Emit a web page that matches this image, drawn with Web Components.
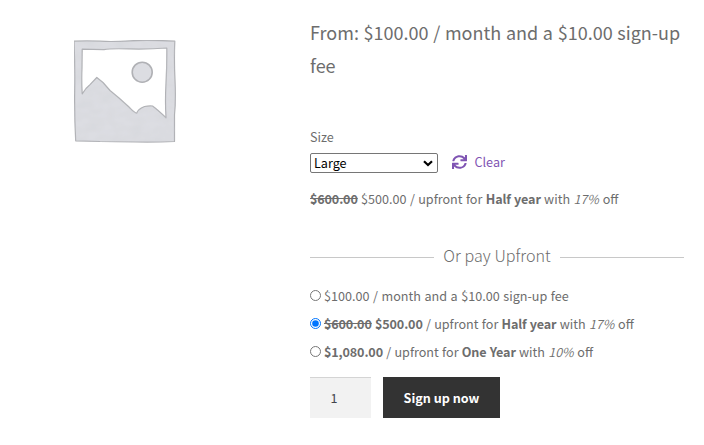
<!DOCTYPE html>
<html lang="en">
<head>
<meta charset="utf-8">
<title>Subscription product</title>
<style>
  body {
    margin: 0;
    width: 704px;
    height: 445px;
    overflow: hidden;
    background: #fff;
    color: #6d6d6d;
    font: 12.6px/22px "Noto Sans CJK SC", "Open Sans", sans-serif;
    word-spacing: 0.75px;
  }
</style>
</head>
<body>
<product-page>
  <product-image slot="gallery"></product-image>
  <product-price>From: $100.00 / month and a $10.00 sign-up fee</product-price>
  <variation-select label="Size" value="Large"></variation-select>
  <plan-text class="summary"><s>$600.00</s> $500.00 / upfront for <b>Half year</b> with <i>17%</i> off</plan-text>
  <section-divider>Or pay Upfront</section-divider>
  <plan-options>
    <plan-option>$100.00 / month and a $10.00 sign-up fee</plan-option>
    <plan-option checked><s>$600.00</s> <b>$500.00</b> / upfront for <b>Half year</b> with <i>17%</i> off</plan-option>
    <plan-option><b>$1,080.00</b> / upfront for <b>One Year</b> with <i>10%</i> off</plan-option>
  </plan-options>
  <add-to-cart quantity="1">Sign up now</add-to-cart>
</product-page>

<script>
// Attach an open shadow root and clone the markup into it
function render(element, html) {
  const template = document.createElement('template');
  template.innerHTML = html;
  element.attachShadow({ mode: 'open' }).appendChild(template.content.cloneNode(true));
}

// Inline marks that a plan description may contain
const marks = `
  ::slotted(s), ::slotted(b) { font-weight: 700; letter-spacing: -0.14px; }
  ::slotted(i) { margin-right: 0.5px; font-style: italic; font-weight: 350; }
`;

class ProductPage extends HTMLElement {
  constructor() {
    super();
    render(this, `
      <style>
        :host { display: grid; grid-template-columns: 310px 374px; }
        .summary { display: flex; flex-direction: column; padding-top: 16px; }
      </style>
      <slot name="gallery"></slot>
      <div class="summary"><slot></slot></div>
    `);
  }
}

class ProductImage extends HTMLElement {
  constructor() {
    super();
    render(this, `
      <style>
        :host { display: block; padding: 39px 0 0 72px; }
        svg { display: block; }
      </style>
      <svg width="105" height="105" viewBox="72 39 105 105">
        <defs>
          <filter id="paper" x="0" y="0" width="100%" height="100%">
            <feTurbulence type="fractalNoise" baseFrequency="0.07 0.11" numOctaves="2" seed="4" result="noise"/>
            <feColorMatrix in="noise" values="0 0 0 0 0.6  0 0 0 0 0.61  0 0 0 0 0.64  0.5 0 0 0 -0.17" result="tint"/>
            <feComposite in="tint" in2="SourceGraphic" operator="in" result="grain"/>
            <feMerge><feMergeNode in="SourceGraphic"/><feMergeNode in="grain"/></feMerge>
          </filter>
        </defs>
        <g fill="#dcdde2" stroke="#b0b1b5" stroke-width="1.2" stroke-linejoin="round">
          <path filter="url(#paper)" fill-rule="evenodd" d="M74 41.2 Q87 40.4 100 41.2 T130 40.8 T174.8 41.2 Q174 60 175 80 T174.5 115 L174.5 141.5 Q155 142.4 135 142 T100 141.5 L75.7 140.8 Q74.3 115 74.7 90 T74 41.2Z
            M82.2 49.2 L82 68 Q81.4 80 82.2 93.8 L86 88.5 90 84.6 96.8 77.5 103 82.5 110 90.5 119 98 129 107 C132 110 134 112.6 136.8 113.2 Q137.5 109.5 144.5 106.5 Q149 105.6 152.5 106 Q158 110 166 117.8 Q165 101 166 83 T166.8 48 Q148 49.4 129 48.9 T104 49.6 Z"/>
          <circle cx="142.2" cy="72.2" r="10" stroke-width="1.6"/>
        </g>
      </svg>
    `);
  }
}

class ProductPrice extends HTMLElement {
  constructor() {
    super();
    render(this, `
      <style>
        :host { display: block; height: 110px; font-size: 18px; line-height: 33px; word-spacing: 0.65px; }
      </style>
      <slot></slot>
    `);
  }
}

class VariationSelect extends HTMLElement {
  constructor() {
    super();
    render(this, `
      <style>
        :host { display: block; }
        .label { height: 27px; }
        .row { display: flex; align-items: center; height: 20px; }
        .select {
          display: flex;
          align-items: center;
          justify-content: space-between;
          box-sizing: border-box;
          width: 128px;
          height: 20px;
          padding: 0 4px 0 3px;
          border: 1px solid #767676;
          border-radius: 2px;
          background: #fff;
          color: #000;
          line-height: 18px;
        }
        .sync { margin: -2px 0 0 14px; }
        a { margin: -2px 0 0 7.5px; color: #7f54b3; }
      </style>
      <div class="label">${this.getAttribute('label')}</div>
      <div class="row">
        <div class="select" role="combobox" tabindex="0">
          <span>${this.getAttribute('value')}</span>
          <svg width="10" height="7" viewBox="0 0 10 7" fill="none" stroke="#000" stroke-width="2.2">
            <path d="M1 1.2 5 5 9 1.2"/>
          </svg>
        </div>
        <svg class="sync" width="15" height="14" viewBox="0 0 512 512" preserveAspectRatio="none" fill="#7f54b3">
          <path d="M440.65 12.57l4 82.77A247.16 247.16 0 0 0 255.83 8C134.73 8 33.91 94.92 12.29 209.82A12 12 0 0 0 24.09 224h49.05a12 12 0 0 0 11.67-9.26 175.91 175.91 0 0 1 317-56.94l-101.46-4.86a12 12 0 0 0-12.57 12v47.41a12 12 0 0 0 12 12H500a12 12 0 0 0 12-12V12a12 12 0 0 0-12-12h-47.37a12 12 0 0 0-11.98 12.57zM255.83 432a175.61 175.61 0 0 1-146-77.8l101.8 4.87a12 12 0 0 0 12.57-12v-47.4a12 12 0 0 0-12-12H12a12 12 0 0 0-12 12V500a12 12 0 0 0 12 12h47.35a12 12 0 0 0 12-12.6l-4.15-82.57A247.17 247.17 0 0 0 255.83 504c121.11 0 221.93-86.92 243.55-201.82a12 12 0 0 0-11.8-14.18h-49.05a12 12 0 0 0-11.67 9.26A175.86 175.86 0 0 1 255.83 432z"/>
        </svg>
        <a>Clear</a>
      </div>
    `);
  }
}

class PlanText extends HTMLElement {
  constructor() {
    super();
    render(this, `
      <style>
        :host { display: block; margin-top: 15px; white-space: nowrap; word-spacing: 0.55px; }
        ${marks}
      </style>
      <slot></slot>
    `);
  }
}

class SectionDivider extends HTMLElement {
  constructor() {
    super();
    render(this, `
      <style>
        :host {
          display: flex;
          align-items: center;
          gap: 9px;
          height: 26px;
          margin-top: 32px;
          font-size: 16.1px;
          font-weight: 200;
          white-space: nowrap;
          word-spacing: 0.2px;
        }
        :host::before, :host::after { content: ""; flex: 1; height: 1px; margin-top: 4px; background: #c8c8c8; }
      </style>
      <slot></slot>
    `);
  }
}

class PlanOptions extends HTMLElement {
  constructor() {
    super();
    render(this, `
      <style>
        :host { display: flex; flex-direction: column; gap: 6px; margin-top: 17px; }
      </style>
      <slot></slot>
    `);
  }
}

class PlanOption extends HTMLElement {
  constructor() {
    super();
    render(this, `
      <style>
        :host { display: flex; align-items: center; gap: 3px; height: 22px; white-space: nowrap; }
        :host(:not(:first-child)) { word-spacing: 0.45px; }
        input { flex: none; width: 11px; height: 11px; margin: -1px 0 0; }
        ${marks}
      </style>
      <input type="radio">
      <span><slot></slot></span>
    `);
    this.shadowRoot.querySelector('input').checked = this.hasAttribute('checked');
  }
}

class AddToCart extends HTMLElement {
  constructor() {
    super();
    render(this, `
      <style>
        :host { display: flex; gap: 12px; height: 41px; margin-top: 14px; line-height: 41px; }
        .quantity {
          box-sizing: border-box;
          width: 61px;
          padding-right: 13px;
          background: #f2f2f2;
          box-shadow: inset 0 1px 0 #d4d4d4;
          color: #43454b;
          text-align: center;
        }
        button {
          width: 117px;
          padding: 0 0 2px;
          border: 0;
          background: #333;
          color: #fff;
          font: inherit;
          font-weight: 700;
        }
      </style>
      <div class="quantity">${this.getAttribute('quantity')}</div>
      <button><slot></slot></button>
    `);
  }
}

customElements.define('product-page', ProductPage);
customElements.define('product-image', ProductImage);
customElements.define('product-price', ProductPrice);
customElements.define('variation-select', VariationSelect);
customElements.define('plan-text', PlanText);
customElements.define('section-divider', SectionDivider);
customElements.define('plan-options', PlanOptions);
customElements.define('plan-option', PlanOption);
customElements.define('add-to-cart', AddToCart);
</script>
</body>
</html>
